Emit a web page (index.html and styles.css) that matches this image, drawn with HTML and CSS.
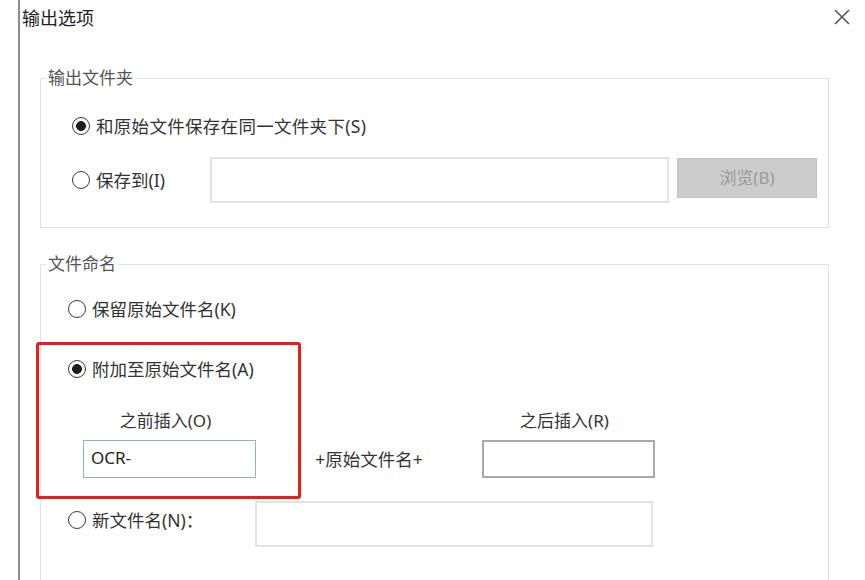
FILE: index.html
```html
<!DOCTYPE html>
<html lang="zh-CN">
<head>
<meta charset="utf-8">
<title>输出选项</title>
<link rel="stylesheet" href="styles.css">
</head>
<body>
<div class="dialog">
  <div class="header">
    <div class="title">输出选项</div>
    <svg class="close" width="16" height="16" viewBox="0 0 16 16"><path d="M1 1 L15 15 M15 1 L1 15" stroke="#555" stroke-width="1.6" fill="none"/></svg>
  </div>

  <fieldset class="group group-folder">
    <legend>输出文件夹</legend>
    <div class="row row-same">
      <span class="radio checked"></span>
      <span class="label label-same">和原始文件保存在同一文件夹下(S)</span>
    </div>
    <div class="row row-save">
      <div class="save-choice">
        <span class="radio"></span>
        <span class="label">保存到(I)</span>
      </div>
      <div class="input input-path"></div>
      <div class="button">浏览(B)</div>
    </div>
  </fieldset>

  <fieldset class="group group-name">
    <legend>文件命名</legend>
    <div class="row row-keep">
      <span class="radio"></span>
      <span class="label">保留原始文件名(K)</span>
    </div>
    <div class="append">
      <div class="highlight"></div>
      <div class="row row-append">
        <span class="radio checked"></span>
        <span class="label">附加至原始文件名(A)</span>
      </div>
      <div class="insert-grid">
        <div class="sub-label">之前插入(O)</div>
        <div></div>
        <div class="sub-label">之后插入(R)</div>
        <div class="input input-before">OCR-</div>
        <div class="plus">+原始文件名+</div>
        <div class="input input-after"></div>
      </div>
    </div>
    <div class="row row-new">
      <div class="new-choice">
        <span class="radio"></span>
        <span class="label">新文件名(N)：</span>
      </div>
      <div class="input input-new"></div>
    </div>
  </fieldset>
</div>
</body>
</html>
```

FILE: styles.css
```css
html, body {
  margin: 0;
  padding: 0;
  background: #ffffff;
}

body {
  width: 865px;
  height: 580px;
  overflow: hidden;
  font-family: "Noto Sans", "Noto Sans CJK SC", sans-serif;
  color: #333333;
}

.dialog {
  margin-left: 18px;
  border-left: 2px solid #8c8c8c;
  height: 580px;
  box-sizing: border-box;
}

.header {
  display: flex;
  justify-content: space-between;
  align-items: flex-start;
  padding: 6px 15px 0 2px;
  height: 68px;
  box-sizing: border-box;
}

.title {
  font-size: 18px;
  line-height: 24px;
  color: #222222;
}

.close {
  margin-top: 3px;
}

.group {
  margin: 0 0 0 20px;
  width: 789px;
  box-sizing: border-box;
  border: 1.5px solid #e2e2e2;
  padding: 0;
  min-width: 0;
}

.group legend {
  font-size: 17px;
  line-height: 20px;
  color: #555555;
  padding: 0 2px;
}

.row {
  display: flex;
  align-items: center;
}

.radio {
  flex: none;
  width: 18px;
  height: 18px;
  box-sizing: border-box;
  border: 1.5px solid #3a3a3a;
  border-radius: 50%;
  background: #fff;
}

.radio.checked {
  background: radial-gradient(circle, #1e1e1e 0 4.6px, #ffffff 5.2px);
}

.label {
  font-size: 17.5px;
  line-height: 30px;
  margin-left: 6px;
  color: #333333;
  white-space: nowrap;
}

.label-same {
  letter-spacing: 0.3px;
}

/* folder group */
.group-folder {
  padding: 23px 0 24px 31px;
}

.group-folder legend {
  margin-left: -26px;
}

.row-same {
  height: 30px;
}

.row-save {
  margin-top: 16px;
}

.save-choice {
  display: flex;
  align-items: center;
  width: 138px;
}

.input {
  box-sizing: border-box;
  border: 2px solid #e3e3e3;
  background: #fff;
}

.input-path {
  width: 459px;
  height: 46px;
}

.button {
  margin-left: 8px;
  margin-top: -5px;
  width: 140px;
  height: 40px;
  box-sizing: border-box;
  background: #cccccc;
  border: 1px solid #c2c2c2;
  color: #9a9a9a;
  font-size: 17px;
  line-height: 38px;
  text-align: center;
}

/* name group */
.group-name {
  margin-top: 26px;
  padding: 20px 0 40px 27px;
}

.group-name legend {
  margin-left: -22px;
}

.row-keep {
  height: 30px;
}

.append {
  position: relative;
  margin-top: 30px;
}

.highlight {
  position: absolute;
  left: -32px;
  top: -12px;
  width: 265px;
  height: 157px;
  box-sizing: border-box;
  border: 3px solid #ea1d1d;
  border-radius: 3px;
}

.row-append {
  height: 30px;
}

.insert-grid {
  display: grid;
  grid-template-columns: 173px 226px 173px;
  grid-template-rows: 20px 38px;
  row-gap: 9px;
  margin-top: 27px;
  margin-left: 15px;
  align-items: center;
}

.sub-label {
  font-size: 17px;
  line-height: 20px;
  text-align: center;
  color: #333333;
  padding-right: 8px;
}

.plus {
  font-size: 17.5px;
  line-height: 24px;
  text-align: center;
  color: #333333;
}

.input-before {
  height: 38px;
  border: 1.5px solid #86b3d6;
  font-size: 17px;
  line-height: 34px;
  padding-left: 7px;
  color: #222222;
}

.input-after {
  height: 38px;
  border: 2px solid #a9a9a9;
}

.row-new {
  margin-top: 23px;
  align-items: flex-start;
}

.new-choice {
  display: flex;
  align-items: center;
  width: 187px;
  margin-top: 4px;
}

.input-new {
  width: 398px;
  height: 46px;
}
```
